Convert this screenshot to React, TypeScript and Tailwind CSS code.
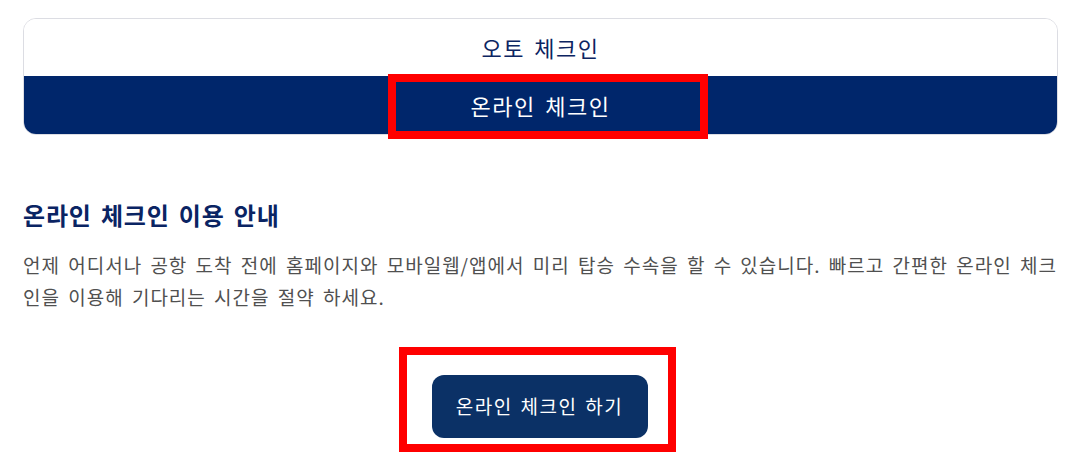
import React from "react";

export default function App() {
  return (
    <div
      className="w-[1076px] h-[461px] bg-white overflow-hidden pl-[23px] pr-[18px] pt-[18px]"
      style={{ fontFamily: '"Noto Sans CJK KR", "Noto Sans", sans-serif' }}
    >
      <div className="relative">
        <div className="rounded-[13px] border border-[#dcdde3] overflow-hidden">
          <div className="h-[57px] flex items-center justify-center text-[22px] text-[#0c2461] bg-white tracking-[1.5px] [word-spacing:3px]">
            오토 체크인
          </div>
          <div className="h-[58px] flex items-center justify-center bg-[#00266b] text-white text-[22px] tracking-[1.5px] [word-spacing:3px]">
            온라인 체크인
          </div>
        </div>
        <span className="absolute left-[365px] top-[56px] w-[320px] h-[65px] border-[8px] border-[#ff0000]"></span>
      </div>
      <h2 className="mt-[64px] text-[24px] font-bold text-[#0a2463] leading-[32px] tracking-[0.8px] [word-spacing:3px]">
        온라인 체크인 이용 안내
      </h2>
      <p className="mt-[18px] text-[19px] leading-[32px] text-[#505050] tracking-[1px] [word-spacing:3px]">
        언제 어디서나 공항 도착 전에 홈페이지와 모바일웹/앱에서 미리 탑승 수속을 할 수 있습니다. 빠르고 간편한 온라인 체크인을 이용해 기다리는 시간을 절약 하세요.
      </p>
      <div className="flex justify-center mt-[62px] pr-[2px]">
        <div className="relative">
          <button className="w-[216px] h-[63px] rounded-[12px] bg-[#0b3166] text-white text-[19px] tracking-[1.5px] [word-spacing:2px]">
            온라인 체크인 하기
          </button>
          <span className="absolute left-[-33px] top-[-28px] w-[277px] h-[105px] border-[8px] border-[#ff0000]"></span>
        </div>
      </div>
    </div>
  );
}
